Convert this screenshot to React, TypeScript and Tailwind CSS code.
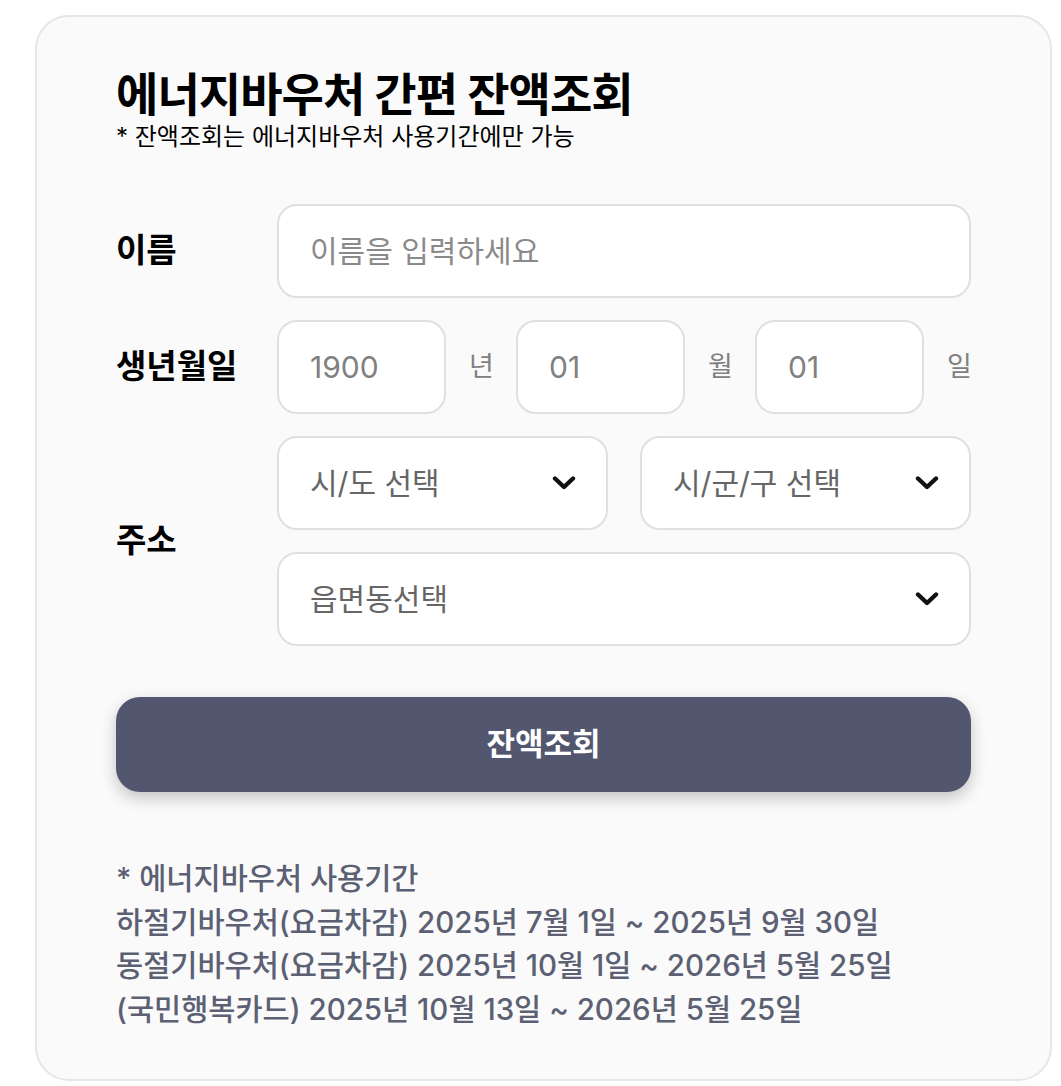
import React from "react";

const font = { fontFamily: 'Inter, "Noto Sans CJK KR", sans-serif' };

function Chevron() {
  return (
    <svg width="24" height="16" viewBox="0 0 24 16" fill="none">
      <path d="M3 3.5 L12 12 L21 3.5" stroke="#111" strokeWidth="4.4" strokeLinecap="round" strokeLinejoin="round" />
    </svg>
  );
}

function Select({ label, className = "" }: { label: string; className?: string }) {
  return (
    <div className={`h-[94px] bg-white border-2 border-[#e0e0e0] rounded-[20px] flex items-center justify-between pl-[31px] pr-[30px] ${className}`}>
      <span className="text-[30px] text-[#666]">{label}</span>
      <Chevron />
    </div>
  );
}

function Box({ value }: { value: string }) {
  return (
    <div className="flex-1 h-[94px] bg-white border-2 border-[#e0e0e0] rounded-[20px] flex items-center pl-[31px]">
      <span className="text-[30px] text-[#808080]">{value}</span>
    </div>
  );
}

export default function App() {
  return (
    <div className="bg-white min-h-[1086px] pt-[15px] pl-[35px]" style={font}>
      <div className="w-[1017px] h-[1066px] bg-[#fafafa] border-2 border-[#e6e6e6] rounded-[34px] px-[79px] pt-[49px]">
        <h1 className="text-[46px] font-bold leading-[56px] text-black tracking-[-0.02em]">에너지바우처 간편 잔액조회</h1>
        <p className="text-[24px] leading-[30px] text-black">* 잔액조회는 에너지바우처 사용기간에만 가능</p>

        <div className="mt-[52px] flex flex-col gap-[22px]">
          <div className="flex items-center">
            <div className="w-[161px] text-[33px] font-bold text-black">이름</div>
            <div className="flex-1 h-[94px] bg-white border-2 border-[#e0e0e0] rounded-[20px] flex items-center pl-[31px]">
              <span className="text-[30px] text-[#8a8a8a]">이름을 입력하세요</span>
            </div>
          </div>

          <div className="flex items-center">
            <div className="w-[161px] text-[33px] font-bold text-black">생년월일</div>
            <div className="flex-1 flex items-center gap-[23px]">
              <Box value="1900" />
              <span className="w-[24px] text-[27px] text-[#808080]">년</span>
              <Box value="01" />
              <span className="w-[24px] text-[27px] text-[#808080]">월</span>
              <Box value="01" />
              <span className="w-[24px] text-[27px] text-[#808080]">일</span>
            </div>
          </div>

          <div className="flex items-center">
            <div className="w-[161px] text-[33px] font-bold text-black">주소</div>
            <div className="flex-1 flex flex-col gap-[22px]">
              <div className="flex gap-[32px]">
                <Select label="시/도 선택" className="flex-1" />
                <Select label="시/군/구 선택" className="flex-1" />
              </div>
              <Select label="읍면동선택" />
            </div>
          </div>
        </div>

        <button className="mt-[51px] w-full h-[95px] rounded-[24px] bg-[#52576f] text-white text-[31px] font-bold shadow-[0_6px_16px_rgba(0,0,0,0.22)] flex items-center justify-center">
          잔액조회
        </button>

        <div className="mt-[65px] text-[29.5px] leading-[43.5px] text-[#5b6073] font-medium">
          <p>* 에너지바우처 사용기간</p>
          <p>하절기바우처(요금차감) 2025년 7월 1일 ~ 2025년 9월 30일</p>
          <p>동절기바우처(요금차감) 2025년 10월 1일 ~ 2026년 5월 25일</p>
          <p>(국민행복카드) 2025년 10월 13일 ~ 2026년 5월 25일</p>
        </div>
      </div>
    </div>
  );
}
